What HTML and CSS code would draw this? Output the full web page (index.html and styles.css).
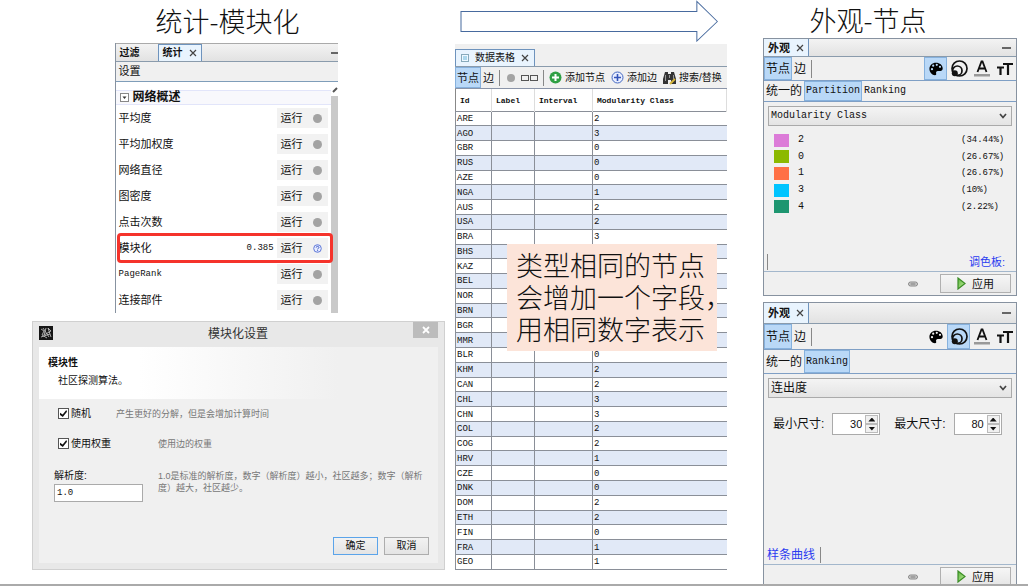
FILE: index.html
```
<!DOCTYPE html>
<html lang="zh-CN">
<head>
<meta charset="utf-8">
<title>统计-模块化</title>
<link rel="stylesheet" href="styles.css">
</head>
<body>
<svg class="defs" width="0" height="0" aria-hidden="true">
  <defs>
    <linearGradient id="play-fill" x1="0" y1="0" x2="1" y2="1"><stop offset="0" stop-color="#5bb53c"/><stop offset="1" stop-color="#c4f0a0"/></linearGradient>
    <symbol id="i-close" viewBox="0 0 8 8"><path d="M1 1l6 6M7 1L1 7" stroke="#444" stroke-width="1.2" fill="none"/></symbol>
    <symbol id="i-palette" viewBox="0 0 14 14"><path fill="#000" fill-rule="evenodd" d="M7 .8C3.2.8.4 3.500.4 6.800c0 3.600 2.700 6.400 5.500 6.400 1.400 0 1.500-1 1.200-2-.3-1.300.4-2.300 1.700-2.300h2.500c1.400 0 2.400-.9 2.400-2.500C13.700 3.200 10.700.8 7 .8zM3 8.300a1.100 1.100 0 1 1 0-2.200 1.100 1.100 0 0 1 0 2.200zm1.200-3.500a1.100 1.100 0 1 1 0-2.200 1.100 1.100 0 0 1 0 2.200zm3.600-.9a1.100 1.100 0 1 1 0-2.200 1.100 1.100 0 0 1 0 2.200zm3.200 2a1.100 1.100 0 1 1 0-2.200 1.100 1.100 0 0 1 0 2.200z"/></symbol>
    <symbol id="i-size" viewBox="0 0 18 18"><g fill="none" stroke="#111" stroke-width="1.700"><circle cx="9.500" cy="8.500" r="7.500"/><circle cx="7.300" cy="10.700" r="4.700"/></g><circle cx="4.800" cy="13.300" r="3" fill="#111"/></symbol>
    <symbol id="i-labelcolor" viewBox="0 0 16 17"><path d="M3.500 12L7.500 1.500h1L12.500 12M5 8.500h6" fill="none" stroke="#111" stroke-width="1.800"/><path d="M0 14h16v2.500H0z" fill="#999"/></symbol>
    <symbol id="i-labelsize" viewBox="0 0 16 14"><path d="M0 5.500h7M3.500 5.500V13M6 2h10M11 2v11" fill="none" stroke="#111" stroke-width="2.200"/></symbol>
    <symbol id="i-play" viewBox="0 0 9 13"><path d="M1 1v11l7-5.500z" fill="url(#play-fill)" stroke="#3a8c25" stroke-width="1.200"/></symbol>
    <symbol id="i-link" viewBox="0 0 10 6"><rect x=".5" y="1" width="9" height="4" rx="2" fill="#ccc" stroke="#888"/><path d="M2.500 3h5" stroke="#777"/></symbol>
    <symbol id="i-down" viewBox="0 0 8 6"><path d="M1 1l3 3.500L7 1" fill="none" stroke="#444" stroke-width="1.700"/></symbol>
  </defs>
</svg>
<main class="slide">
  <section class="col col-left">
    <h1 class="title">统计-模块化</h1>
    <div class="stats">
      <div class="tabs tabs-stats">
        <button class="tab">过滤</button>
        <button class="tab tab-on">统计 <svg class="x"><use href="#i-close"/></svg></button>
        <span class="minus"></span>
      </div>
      <div class="settings">设置</div>
      <div class="stats-main">
        <div class="stats-list">
          <h2 class="group"><svg width="9" height="9" viewBox="0 0 9 9"><rect x=".5" y=".5" width="8" height="8" fill="#fff" stroke="#888"/><path d="M2.500 3.500h4L4.500 6z" fill="#333"/></svg>网络概述</h2>
          <div class="stat"><span>平均度</span><button class="run">运行<i class="dot"></i></button></div>
          <div class="stat"><span>平均加权度</span><button class="run">运行<i class="dot"></i></button></div>
          <div class="stat"><span>网络直径</span><button class="run">运行<i class="dot"></i></button></div>
          <div class="stat"><span>图密度</span><button class="run">运行<i class="dot"></i></button></div>
          <div class="stat"><span>点击次数</span><button class="run">运行<i class="dot"></i></button></div>
          <div class="stat stat-hot"><span>模块化</span><span class="value">0.385</span><button class="run">运行<svg class="help" viewBox="0 0 9 9"><circle cx="4.500" cy="4.500" r="3.800" fill="#e8edff" stroke="#6079d8"/><path d="M3.200 3.600c0-1.800 2.700-1.600 2.700-.1 0 .9-1.300.8-1.300 1.900M4.600 6.200v1" fill="none" stroke="#3858c8"/></svg></button></div>
          <div class="stat"><span class="latin">PageRank</span><button class="run">运行<i class="dot"></i></button></div>
          <div class="stat"><span>连接部件</span><button class="run">运行<i class="dot"></i></button></div>
        </div>
        <div class="scroll"><svg width="7" height="8" viewBox="0 0 7 8"><path d="M2 6l4-4" stroke="#555" stroke-width="2"/></svg><span class="thumb"></span></div>
      </div>
    </div>

    <form class="dialog">
      <header class="dialog-bar">
        <svg width="14" height="14" viewBox="0 0 14 14"><path d="M0 0h14v14H0z" fill="#161616"/><path d="M2 3l3 2-2 4 5 3M4 2l6 9M7 2l-2 7 7-4-3-3 3 9M2 11l9-3" fill="none" stroke="#ccc" stroke-width=".8"/></svg>
        <h2>模块化设置</h2>
        <button type="button" class="dialog-x" aria-label="关闭"><svg width="8" height="8" viewBox="0 0 8 8"><path d="M1 1l6 6M7 1L1 7" stroke="#fff" stroke-width="1.800"/></svg></button>
      </header>
      <div class="dialog-body">
        <div class="intro"><strong>模块性</strong><p>社区探测算法。</p></div>
        <div class="opt opt-random"><label><input type="checkbox" checked>随机</label><span class="hint">产生更好的分解，但是会增加计算时间</span></div>
        <div class="opt opt-wide"><label><input type="checkbox" checked>使用权重</label><span class="hint">使用边的权重</span></div>
        <div class="resolution">
          <div class="field"><label for="res">解析度:</label><input id="res" type="text" value="1.0"></div>
          <p class="hint">1.0是标准的解析度，数字（解析度）越小，社区越多；数字（解析度）越大，社区越少。</p>
        </div>
        <div class="actions"><button type="button" class="btn btn-main">确定</button><button type="button" class="btn">取消</button></div>
      </div>
    </form>
  </section>

  <section class="col col-mid">
    <svg class="arrow" viewBox="0 0 258 42" preserveAspectRatio="none"><path d="M1 11.500h235.500V1.500l20.500 20-20.500 19.500V31.500H1z" fill="#fff" stroke="#476a9e"/></svg>
    <div class="data">
      <div class="tabs tabs-data">
        <button class="tab tab-on"><svg width="8" height="8" viewBox="0 0 8 8"><rect x=".5" y=".5" width="7" height="7" fill="#eef8ff" stroke="#8ab"/><path d="M2 3h4M2 5h4" stroke="#6bb5d8"/></svg>数据表格 <svg class="x"><use href="#i-close"/></svg></button>
      </div>
      <div class="tools">
        <button class="seg seg-on">节点</button><button class="seg">边</button>
        <i class="rule"></i><i class="dot dot-sm"></i><i class="box"></i><i class="box box-next"></i><i class="rule"></i>
        <button class="tool"><svg width="13" height="13" viewBox="0 0 13 13"><circle cx="6.500" cy="6.500" r="6" fill="#2fa044"/><path d="M6.500 3v7M3 6.500h7" stroke="#fff" stroke-width="2"/></svg>添加节点</button>
        <button class="tool"><svg width="13" height="13" viewBox="0 0 13 13"><circle cx="6.500" cy="6.500" r="5.500" fill="#e8eeff" stroke="#4468c0"/><path d="M6.500 3v7M3 6.500h7" stroke="#3454b8" stroke-width="1.600"/></svg>添加边</button>
        <button class="tool"><svg width="13" height="14" viewBox="0 0 13 14"><path d="M2 1h3v2h3V1h3l2 7v5H8V9H5v4H0V8z" fill="#333"/><path d="M2.500 4v6M10.500 4v4M6.500 4v3" stroke="#999"/><path d="M7 13l5-5" stroke="#d8b83a" stroke-width="2"/></svg>搜索/替换</button>
      </div>
      <div class="table-area">
      <table>
        <colgroup><col class="c-id"><col class="c-label"><col class="c-int"><col></colgroup>
        <thead><tr><th>Id</th><th>Label</th><th>Interval</th><th>Modularity Class</th></tr></thead>
        <tbody>
          <tr><td>ARE</td><td></td><td></td><td>2</td></tr>
          <tr><td>AGO</td><td></td><td></td><td>3</td></tr>
          <tr><td>GBR</td><td></td><td></td><td>0</td></tr>
          <tr><td>RUS</td><td></td><td></td><td>0</td></tr>
          <tr><td>AZE</td><td></td><td></td><td>0</td></tr>
          <tr><td>NGA</td><td></td><td></td><td>1</td></tr>
          <tr><td>AUS</td><td></td><td></td><td>2</td></tr>
          <tr><td>USA</td><td></td><td></td><td>2</td></tr>
          <tr><td>BRA</td><td></td><td></td><td>3</td></tr>
          <tr><td>BHS</td><td></td><td></td><td></td></tr>
          <tr><td>KAZ</td><td></td><td></td><td></td></tr>
          <tr><td>BEL</td><td></td><td></td><td></td></tr>
          <tr><td>NOR</td><td></td><td></td><td></td></tr>
          <tr><td>BRN</td><td></td><td></td><td></td></tr>
          <tr><td>BGR</td><td></td><td></td><td></td></tr>
          <tr><td>MMR</td><td></td><td></td><td></td></tr>
          <tr><td>BLR</td><td></td><td></td><td>0</td></tr>
          <tr><td>KHM</td><td></td><td></td><td>2</td></tr>
          <tr><td>CAN</td><td></td><td></td><td>2</td></tr>
          <tr><td>CHL</td><td></td><td></td><td>3</td></tr>
          <tr><td>CHN</td><td></td><td></td><td>3</td></tr>
          <tr><td>COL</td><td></td><td></td><td>2</td></tr>
          <tr><td>COG</td><td></td><td></td><td>2</td></tr>
          <tr><td>HRV</td><td></td><td></td><td>1</td></tr>
          <tr><td>CZE</td><td></td><td></td><td>0</td></tr>
          <tr><td>DNK</td><td></td><td></td><td>0</td></tr>
          <tr><td>DOM</td><td></td><td></td><td>2</td></tr>
          <tr><td>ETH</td><td></td><td></td><td>2</td></tr>
          <tr><td>FIN</td><td></td><td></td><td>0</td></tr>
          <tr><td>FRA</td><td></td><td></td><td>1</td></tr>
          <tr><td>GEO</td><td></td><td></td><td>1</td></tr>
        </tbody>
      </table>
      </div>
    </div>
    <p class="note">类型相同的节点<br>会增加一个字段，<br>用相同数字表示</p>
  </section>

  <section class="col col-right">
    <h1 class="title title-right">外观-节点</h1>
    <div class="look">
      <div class="tabs tabs-look"><button class="tab tab-on">外观 <svg class="x"><use href="#i-close"/></svg></button><span class="minus"></span></div>
      <div class="modes">
        <button class="seg seg-on">节点</button><button class="seg">边</button><i class="rule"></i>
        <span class="icons">
          <button class="icon icon-on" aria-label="颜色"><svg width="14" height="14"><use href="#i-palette"/></svg></button>
          <button class="icon" aria-label="大小"><svg width="18" height="18"><use href="#i-size"/></svg></button>
          <button class="icon" aria-label="标签颜色"><svg width="16" height="17"><use href="#i-labelcolor"/></svg></button>
          <button class="icon" aria-label="标签尺寸"><svg width="16" height="14"><use href="#i-labelsize"/></svg></button>
        </span>
      </div>
      <div class="kinds"><button class="seg">统一的</button><button class="seg seg-on latin">Partition</button><button class="seg latin">Ranking</button></div>
      <div class="combo"><select class="latin" aria-label="属性"><option>Modularity Class</option></select><svg width="8" height="6"><use href="#i-down"/></svg></div>
      <ul class="legend">
        <li><i class="sw sw-violet"></i><span>2</span><span class="pct">(34.44%)</span></li>
        <li><i class="sw sw-olive"></i><span>0</span><span class="pct">(26.67%)</span></li>
        <li><i class="sw sw-coral"></i><span>1</span><span class="pct">(26.67%)</span></li>
        <li><i class="sw sw-cyan"></i><span>3</span><span class="pct">(10%)</span></li>
        <li><i class="sw sw-green"></i><span>4</span><span class="pct">(2.22%)</span></li>
      </ul>
      <div class="links links-end"><i class="rule"></i><a href="#">调色板:</a></div>
      <div class="apply-row"><svg width="10" height="6"><use href="#i-link"/></svg><button class="apply"><svg width="9" height="13"><use href="#i-play"/></svg>应用</button></div>
    </div>

    <div class="look look-size">
      <div class="tabs tabs-look"><button class="tab tab-on">外观 <svg class="x"><use href="#i-close"/></svg></button><span class="minus"></span></div>
      <div class="modes">
        <button class="seg seg-on">节点</button><button class="seg">边</button><i class="rule"></i>
        <span class="icons">
          <button class="icon" aria-label="颜色"><svg width="14" height="14"><use href="#i-palette"/></svg></button>
          <button class="icon icon-on" aria-label="大小"><svg width="18" height="18"><use href="#i-size"/></svg></button>
          <button class="icon" aria-label="标签颜色"><svg width="16" height="17"><use href="#i-labelcolor"/></svg></button>
          <button class="icon" aria-label="标签尺寸"><svg width="16" height="14"><use href="#i-labelsize"/></svg></button>
        </span>
      </div>
      <div class="kinds"><button class="seg">统一的</button><button class="seg seg-on latin">Ranking</button></div>
      <div class="combo"><select aria-label="排序依据"><option>连出度</option></select><svg width="8" height="6"><use href="#i-down"/></svg></div>
      <div class="sizes">
        <label for="min">最小尺寸:</label>
        <span class="spin"><input id="min" type="text" value="30"><span class="steps"><button class="up" aria-label="增加"></button><button class="down" aria-label="减少"></button></span></span>
        <label for="max">最大尺寸:</label>
        <span class="spin"><input id="max" type="text" value="80"><span class="steps"><button class="up" aria-label="增加"></button><button class="down" aria-label="减少"></button></span></span>
      </div>
      <div class="links"><a href="#">样条曲线</a><i class="rule"></i></div>
      <div class="apply-row"><svg width="10" height="6"><use href="#i-link"/></svg><button class="apply"><svg width="9" height="13"><use href="#i-play"/></svg>应用</button></div>
    </div>
  </section>
</main>
</body>
</html>
```
FILE: styles.css
```
* { box-sizing: border-box; margin: 0; padding: 0; }
body {
  background: #fff;
  color: #111;
  font: 11px/14px "Liberation Sans", "Noto Sans CJK SC", sans-serif;
}
button, input, select { font: inherit; color: inherit; }
button { background: none; border: 0; white-space: nowrap; }
svg { flex: none; display: block; }
i { flex: none; display: block; }
.defs { position: absolute; }
.latin, .value, table, .legend, .field input { font-family: "Liberation Mono", "Noto Sans CJK SC", monospace; }

.slide {
  display: grid;
  grid-template-columns: 413fr 10fr 272fr 36fr 254fr;
  height: 100vh;
  min-height: 560px;
  padding: 0 11px 0 32px;
  border-bottom: 2px solid #aaa;
  overflow: hidden;
}
.col { display: flex; flex-direction: column; min-width: 0; min-height: 0; }
.col-mid { grid-column: 3; position: relative; }
.col-right { grid-column: 5; }
.title {
  flex: none;
  height: 43px;
  font: 300 27px/42px "Noto Sans CJK SC", sans-serif;
  text-align: center;
  padding-right: 22px;
}
.title-right { height: 38px; line-height: 40px; }
.col-right .title { padding-right: 44px; }

/* Tabs */
.tabs { display: flex; align-items: stretch; background: linear-gradient(#f3f3f3, #e2e2e2); border-bottom: 1px solid #8a9bac; }
.tab { display: flex; align-items: center; gap: 6px; padding: 0 5px; }
.tab-on { background: #e9f4fe; border: 1px solid #6e93bd; border-bottom: 0; }
.x { width: 8px; height: 8px; }
.minus { width: 9px; height: 2px; margin: auto 5px auto auto; background: #666; }

/* Statistics */
.stats { flex: none; margin-left: 20%; width: 54%; border-left: 1px solid #8792a0; }
.tabs-stats { height: 19px; border-top: 1px solid #aaa; font-size: 10px; font-weight: bold; }
.tabs-stats .tab { padding: 0 4px; }
.tabs-stats .tab-on { margin-left: 14px; }
.tabs-stats .minus { margin-right: 0; width: 7px; }
.settings { height: 20px; padding: 2px 3px; background: #f0f0f0; border-bottom: 1px solid #7f9db9; }
.stats-main { display: flex; }
.stats-list { flex: 1; padding-top: 8px; }
.group {
  display: flex; align-items: center; gap: 4px;
  height: 15px; padding-left: 4px;
  background: #f8f8fc; border: solid #e2e5fa; border-width: 1px 0;
  font-size: 12px; line-height: 13px;
}
.stat { display: flex; align-items: center; height: 26px; padding: 0 3px 0 0; margin-left: 3px; }
.stat-hot { outline: 3px solid #f5332b; outline-offset: -1px; border-radius: 2px; position: relative; }
.run { display: flex; align-items: center; gap: 10px; height: 20px; padding: 0 6px 0 4px; margin-left: auto; background: #f2f2f2; }
.value { margin-left: auto; margin-right: 3px; font-size: 9px; }
.value + .run { margin-left: 0; }
.stat .latin { font-size: 9px; }
.dot { width: 9px; height: 9px; border-radius: 50%; background: #a3a3a3; }
.help { width: 9px; height: 9px; }
.scroll { display: flex; flex-direction: column; width: 7px; padding-top: 4px; }
.thumb { flex: 1; background: #c9c9c9; margin-top: 2px; }

/* Settings dialog */
.dialog { display: flex; flex-direction: column; margin: 8px 0 14px; flex: 1; background: #e8e8e8; border: 1px solid #d0d0d0; padding: 0 6px 6px; min-height: 230px; }
.dialog-bar { display: flex; align-items: flex-start; height: 25px; flex: none; }
.dialog-bar > svg { margin-top: 4px; }
.dialog-bar h2 { flex: 1; padding: 4px 0 0 10px; text-align: center; font-size: 12px; font-weight: normal; color: #333; line-height: 16px; }
.dialog-x { display: grid; place-items: center; width: 25px; height: 16px; background: #bcbcbc; }
.dialog-body { display: flex; flex-direction: column; flex: 1; background: #f0f0f0; }
.intro { height: 52px; padding: 9px; background: linear-gradient(90deg, #fff 25%, #f0f0f0 75%); font-size: 10px; }
.intro strong { display: block; line-height: 14px; }
.intro p { padding: 4px 10px; }
.opt { display: flex; align-items: center; height: 31px; padding-left: 19px; font-size: 10px; }
.opt-random { height: 29px; }
.opt label { display: flex; align-items: center; gap: 2px; width: 58px; }
.opt-wide label { width: 100px; }
.hint { font-size: 9px; line-height: 12px; color: #777; }
.opt input { appearance: none; width: 11px; height: 11px; border: 1px solid #555; background: #fff; display: grid; place-items: center; }
.opt input:checked::before { content: ""; width: 7px; height: 7px; background: #111; clip-path: polygon(0 40%, 38% 65%, 90% 0, 100% 25%, 40% 100%, 0 70%); }
.resolution { display: flex; gap: 15px; padding: 9px 10px 0 15px; font-size: 10px; }
.field { flex: none; width: 89px; }
.field label { display: block; line-height: 16px; }
.field input { width: 100%; height: 18px; border: 1px solid #aaa; background: #fff; padding: 0 2px; font-size: 9px; }
.resolution .hint { padding-top: 2px; }
.actions { display: flex; justify-content: flex-end; gap: 6px; margin-top: auto; padding: 8px 9px; }
.btn { width: 45px; height: 18px; border: 1px solid #adadad; background: linear-gradient(#f2f2f2, #e4e4e4); font-size: 10px; line-height: 16px; }
.btn-main { border-color: #5ba4ea; }

/* Data table */
.arrow { flex: none; width: 95%; height: 42px; margin: 0 0 2px 5px; }
.data { display: flex; flex-direction: column; flex: 1; min-height: 0; background: #f0f0f0; margin-bottom: 14px; font-size: 10px; }
.tabs-data { flex: none; height: 23px; padding-top: 5px; background: #f0f0f0; }
.tools { display: flex; align-items: center; flex: none; height: 22px; border-bottom: 1px solid #8a94a8; overflow: hidden; }
.seg { align-self: stretch; padding: 0 2px; font-size: 11px; border: 1px solid transparent; }
.tools .seg { padding: 0 1px; }
.seg-on { background: #b9d8f7; border-color: #86b1dd; }
.rule { width: 1px; height: 16px; background: #888; }
.tools .rule { margin: 0 5px; }
.tools .rule:first-of-type { margin: 0 7px 0 3px; }
.dot-sm { width: 8px; height: 8px; margin-right: 6px; }
.box { width: 8px; height: 6px; border: 1px solid #555; }
.box-next { margin-left: 1px; }
.tool { display: flex; align-items: center; gap: 3px; margin-right: 6px; }
.tool:last-child { margin-right: 0; }
.table-area { flex: 1; min-height: 0; display: grid; }
table { width: 100%; height: 100%; table-layout: fixed; border-collapse: collapse; background: #fff; line-height: 10px; border-left: 1px solid #888; }
.c-id { width: 36px; }
.c-label { width: 43px; }
.c-int { width: 58px; }
th { height: 22px; padding: 2px 0 0 4px; text-align: left; font-size: 8px; border-right: 1px solid #ddd; white-space: nowrap; }
td { padding: 1px 1px 0; font-size: 9px; border: solid #8a8f98; border-width: 1px 0 1px 1px; }
tbody tr:nth-child(even) { background: #e1e9f7; }
.note {
  position: absolute; left: 52px; top: 244px;
  width: 210px; padding: 5px 9px 6px;
  background: #fce4d9;
  font: 300 27px/32px "Noto Sans CJK SC", sans-serif;
  white-space: nowrap;
}

/* Appearance */
.look { display: flex; flex-direction: column; flex: none; height: 258px; background: #f0f0f0; border: 1px solid #8792a0; }
.look-size { flex: 1 0 auto; height: auto; min-height: 284px; margin: 6px 0 -5px; }
.tabs-look { flex: none; height: 18px; font-weight: bold; }
.tabs-look .tab-on { border-width: 0 1px 0 0; padding: 0 4px; }
.modes, .kinds { display: flex; align-items: center; flex: none; height: 24px; border-bottom: 1px solid #7f9fc5; }
.kinds { height: 21px; }
.look .seg { font-size: 12px; padding: 0 1px; }
.look .seg.latin { font-size: 10px; }
.modes .rule { margin-left: 3px; height: 18px; }
.icons { display: flex; align-self: stretch; margin-left: auto; }
.icon { display: grid; place-items: center; width: 23px; border: 1px solid transparent; }
.icon-on { background: #b9d8f7; border-color: #86b1dd; }
.combo { display: flex; align-items: center; position: relative; margin: 4px 4px 0; flex: none; }
.combo select { appearance: none; width: 100%; height: 20px; padding: 0 2px; border: 1px solid #aaa; background: linear-gradient(#f4f4f4, #e4e4e4); font-size: 12px; border-radius: 0; }
.combo select.latin { font-size: 10px; }
.combo svg { position: absolute; right: 5px; }
.legend { display: grid; height: 83px; flex: none; margin: 6px 6px 0 10px; list-style: none; font-size: 10px; }
.legend li { display: flex; align-items: center; gap: 9px; }
.sw { width: 15px; height: 13px; }
.sw-violet { background: #dc7bd8; }
.sw-olive { background: #8cb900; }
.sw-coral { background: #ff7045; }
.sw-cyan { background: #00c4ff; }
.sw-green { background: #1e9670; }
.pct { margin-left: auto; width: 49px; font-size: 9px; }
.links { display: flex; align-items: center; gap: 5px; margin-top: auto; height: 20px; padding: 0 3px; flex: none; border-bottom: 1px solid #a3b7cc; }
.links-end { justify-content: space-between; padding-right: 11px; }
.links a { color: #2b3cf0; text-decoration: none; font-size: 12px; }
.links-end a { font-size: 11px; }
.apply-row { display: flex; align-items: center; justify-content: flex-end; gap: 22px; height: 23px; padding: 0 5px 0 0; flex: none; }
.apply { display: flex; align-items: center; justify-content: center; gap: 6px; width: 71px; height: 19px; border: 1px solid #b0b0b0; background: linear-gradient(#f6f6f6, #e6e6e6); }
.look-size .tabs-look { height: 21px; }
.look-size .modes { height: 26px; }
.look-size .kinds { height: 24px; }
.sizes { display: flex; align-items: center; padding: 15px 16px 0 9px; font-size: 12px; }
.sizes label { white-space: nowrap; }
.spin { display: flex; width: 48px; height: 22px; margin-left: 8px; border: 1px solid #aaa; background: #fff; }
.sizes label + .spin + label { margin-left: 14px; }
.spin input { flex: 1; min-width: 0; border: 0; background: none; text-align: right; padding-right: 3px; font-size: 11px; }
.steps { display: flex; flex-direction: column; width: 14px; padding: 1px 1px 1px 0; }
.steps button { flex: 1; display: grid; place-items: center; border: 1px solid #bbb; background: #f0f0f0; }
.steps button::before { content: ""; width: 7px; height: 4px; background: #111; clip-path: polygon(50% 0, 100% 100%, 0 100%); }
.steps .down::before { clip-path: polygon(0 0, 100% 0, 50% 100%); }
```
